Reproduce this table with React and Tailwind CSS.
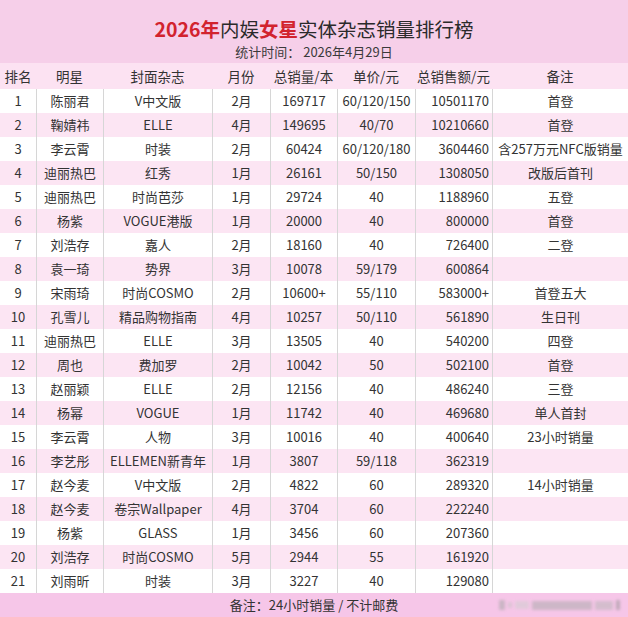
import React from "react";

const rows = [
  ["1", "陈丽君", "V中文版", "2月", "169717", "60/120/150", "10501170", "首登"],
  ["2", "鞠婧祎", "ELLE", "4月", "149695", "40/70", "10210660", "首登"],
  ["3", "李云霄", "时装", "2月", "60424", "60/120/180", "3604460", "含257万元NFC版销量"],
  ["4", "迪丽热巴", "红秀", "1月", "26161", "50/150", "1308050", "改版后首刊"],
  ["5", "迪丽热巴", "时尚芭莎", "1月", "29724", "40", "1188960", "五登"],
  ["6", "杨紫", "VOGUE港版", "1月", "20000", "40", "800000", "首登"],
  ["7", "刘浩存", "嘉人", "2月", "18160", "40", "726400", "二登"],
  ["8", "袁一琦", "势界", "3月", "10078", "59/179", "600864", ""],
  ["9", "宋雨琦", "时尚COSMO", "2月", "10600+", "55/110", "583000+", "首登五大"],
  ["10", "孔雪儿", "精品购物指南", "4月", "10257", "50/110", "561890", "生日刊"],
  ["11", "迪丽热巴", "ELLE", "3月", "13505", "40", "540200", "四登"],
  ["12", "周也", "费加罗", "2月", "10042", "50", "502100", "首登"],
  ["13", "赵丽颖", "ELLE", "2月", "12156", "40", "486240", "三登"],
  ["14", "杨幂", "VOGUE", "1月", "11742", "40", "469680", "单人首封"],
  ["15", "李云霄", "人物", "3月", "10016", "40", "400640", "23小时销量"],
  ["16", "李艺彤", "ELLEMEN新青年", "1月", "3807", "59/118", "362319", ""],
  ["17", "赵今麦", "V中文版", "2月", "4822", "60", "289320", "14小时销量"],
  ["18", "赵今麦", "卷宗Wallpaper", "4月", "3704", "60", "222240", ""],
  ["19", "杨紫", "GLASS", "1月", "3456", "60", "207360", ""],
  ["20", "刘浩存", "时尚COSMO", "5月", "2944", "55", "161920", ""],
  ["21", "刘雨昕", "时装", "3月", "3227", "40", "129080", ""],
];

const headers = ["排名", "明星", "封面杂志", "月份", "总销量/本", "单价/元", "总销售额/元", "备注"];

const gridCols = "grid grid-cols-[36px_67px_109px_58px_67px_78px_77px_1fr]";

export default function App() {
  return (
    <div
      className="w-[628px] h-[617px] overflow-hidden text-[#333333] bg-white"
      style={{ fontFamily: '"Noto Sans CJK SC", "Noto Sans", sans-serif' }}
    >
      {/* Title band */}
      <div className="h-[63px] bg-[#f6cfe9] flex flex-col items-center pt-[18px]">
        <div className="text-[19.5px] leading-[22px]">
          <span className="text-[#d2232e] font-bold">2026年</span>
          <span className="text-[#2a2a2a]">内娱</span>
          <span className="text-[#d2232e] font-bold">女星</span>
          <span className="text-[#2a2a2a]">实体杂志销量排行榜</span>
        </div>
        <div className="text-[13px] leading-[16px] text-[#3a3a3a] mt-[4px]">
          统计时间：&nbsp;2026年4月29日
        </div>
      </div>

      {/* Header row */}
      <div className={`${gridCols} h-[26px] bg-[#fce2f2] text-[13.5px] leading-[26px] text-[#333]`}>
        {headers.map((h) => (
          <div key={h} className="text-center whitespace-nowrap">
            {h}
          </div>
        ))}
      </div>

      {/* Body rows */}
      {rows.map((r, i) => (
        <div
          key={r[0]}
          className={`${gridCols} h-[24px] text-[13px] leading-[24px] ${
            i % 2 === 0 ? "bg-white" : "bg-[#fce5f3]"
          }`}
        >
          {r.map((c, j) => (
            <div
              key={j}
              className={`whitespace-nowrap overflow-hidden ${j > 0 ? "border-l border-[#d6d6d6]" : ""} ${
                j === 6 ? "text-right pr-[3px]" : "text-center"
              }`}
            >
              {c}
            </div>
          ))}
        </div>
      ))}

      {/* Footer */}
      <div className="relative h-[24px] bg-[#f6c6e8] text-[13px] leading-[24px] text-center text-[#333]">
        备注：24小时销量 / 不计邮费
        <div className="absolute right-[8px] top-[7px] flex items-center gap-[3px] blur-[1.5px] opacity-70">
          <span className="w-[6px] h-[10px] bg-[#b9aeb6]" />
          <span className="w-[4px] h-[6px] bg-[#cfc4cc]" />
          <span className="w-[14px] h-[8px] bg-[#d8cdd5]" />
          <span className="w-[60px] h-[9px] bg-[#bdb1ba]" />
          <span className="w-[18px] h-[9px] bg-[#c6bac3]" />
          <span className="w-[4px] h-[10px] bg-[#a99ea6]" />
        </div>
      </div>
    </div>
  );
}
